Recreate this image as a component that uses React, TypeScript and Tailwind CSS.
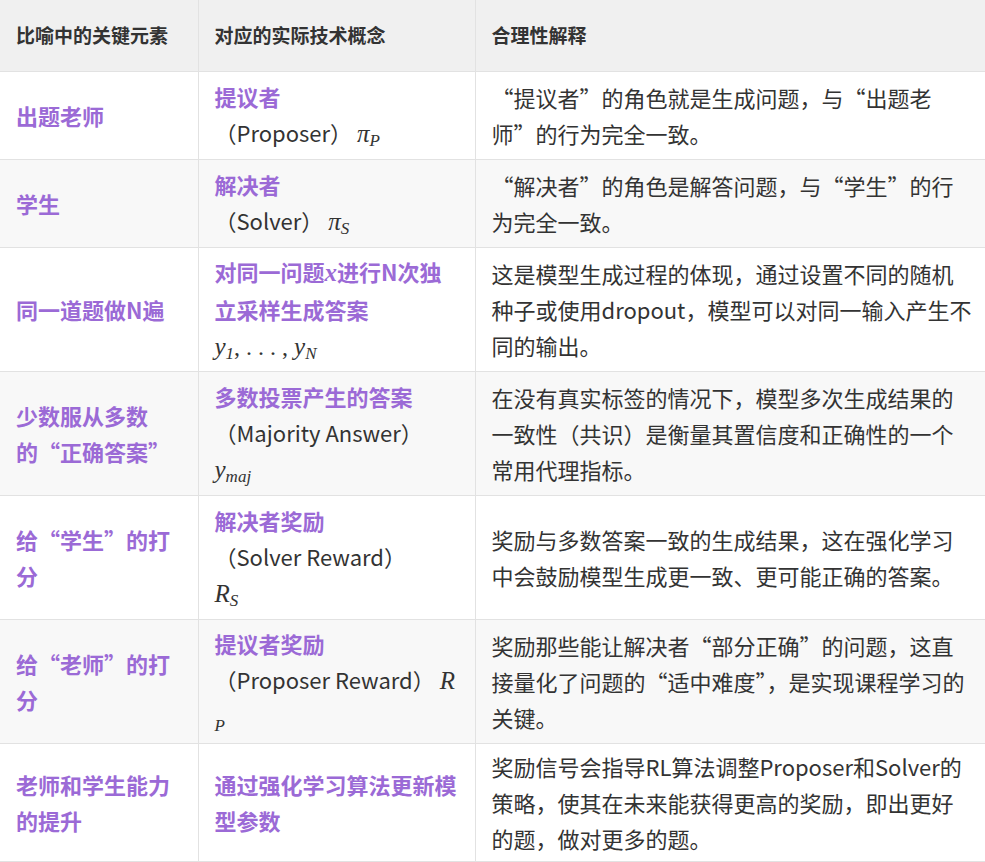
import React from "react";

const P = "text-[#9b6ad6] font-bold";
const M = ({ b, s }: { b: string; s?: string }) => (
  <span className="italic text-[25px]" style={{ fontFamily: '"Liberation Serif", serif' }}>
    {b}
    {s && <sub className="text-[17px] italic">{s}</sub>}
  </span>
);

const rows: [React.ReactNode, React.ReactNode, string, number][] = [
  ["出题老师", <><span className={P}>提议者</span><br />（Proposer） <M b="π" s="P" /></>, "“提议者”的角色就是生成问题，与“出题老师”的行为完全一致。", 88],
  ["学生", <><span className={P}>解决者</span><br />（Solver） <M b="π" s="S" /></>, "“解决者”的角色是解答问题，与“学生”的行为完全一致。", 88],
  ["同一道题做N遍", <><span className={P}>对同一问题<M b="x" />进行N次独立采样生成答案</span><br /><M b="y" s="1" /><span className="text-[24px]" style={{ fontFamily: '"Liberation Serif", serif' }}>, . . . , </span><M b="y" s="N" /></>, "这是模型生成过程的体现，通过设置不同的随机种子或使用dropout，模型可以对同一输入产生不同的输出。", 124],
  ["少数服从多数的“正确答案”", <><span className={P}>多数投票产生的答案</span><br />（Majority Answer）<br /><M b="y" s="maj" /></>, "在没有真实标签的情况下，模型多次生成结果的一致性（共识）是衡量其置信度和正确性的一个常用代理指标。", 124],
  ["给“学生”的打分", <><span className={P}>解决者奖励</span><br />（Solver Reward）<br /><M b="R" s="S" /></>, "奖励与多数答案一致的生成结果，这在强化学习中会鼓励模型生成更一致、更可能正确的答案。", 124],
  ["给“老师”的打分", <><span className={P}>提议者奖励</span><br />（Proposer Reward） <M b="R" s="P" /></>, "奖励那些能让解决者“部分正确”的问题，这直接量化了问题的“适中难度”，是实现课程学习的关键。", 124],
  ["老师和学生能力的提升", <span className={P}>通过强化学习算法更新模型参数</span>, "奖励信号会指导RL算法调整Proposer和Solver的策略，使其在未来能获得更高的奖励，即出更好的题，做对更多的题。", 118],
];

export default function App() {
  return (
    <div className="w-[985px] h-[862px] bg-white text-[#333] overflow-hidden" style={{ fontFamily: '"Noto Sans CJK SC", sans-serif' }}>
      <table className="table-fixed border-collapse w-[985px]">
        <colgroup>
          <col className="w-[198px]" />
          <col className="w-[277px]" />
          <col className="w-[510px]" />
        </colgroup>
        <thead>
          <tr className="bg-[#f0f0f0] h-[71px] text-[19px] font-bold leading-[30px] text-left">
            <th className="px-4 border border-[#e2e2e2] border-t-0 border-l-0">比喻中的关键元素</th>
            <th className="px-4 border border-[#e2e2e2] border-t-0">对应的实际技术概念</th>
            <th className="px-4 border border-[#e2e2e2] border-t-0 border-r-0">合理性解释</th>
          </tr>
        </thead>
        <tbody className="text-[22px] leading-[36px]">
          {rows.map(([a, b, c, h], i) => (
            <tr key={i} className={i % 2 ? "bg-[#f8f8f8]" : "bg-white"} style={{ height: h }}>
              <td className={`pl-4 pr-3 border border-[#e2e2e2] border-l-0 ${P}`}>{a}</td>
              <td className="pl-4 pr-3 border border-[#e2e2e2] break-all">{b}</td>
              <td className="pl-4 pr-3 border border-[#e2e2e2] border-r-0 break-all">{c}</td>
            </tr>
          ))}
        </tbody>
      </table>
    </div>
  );
}
